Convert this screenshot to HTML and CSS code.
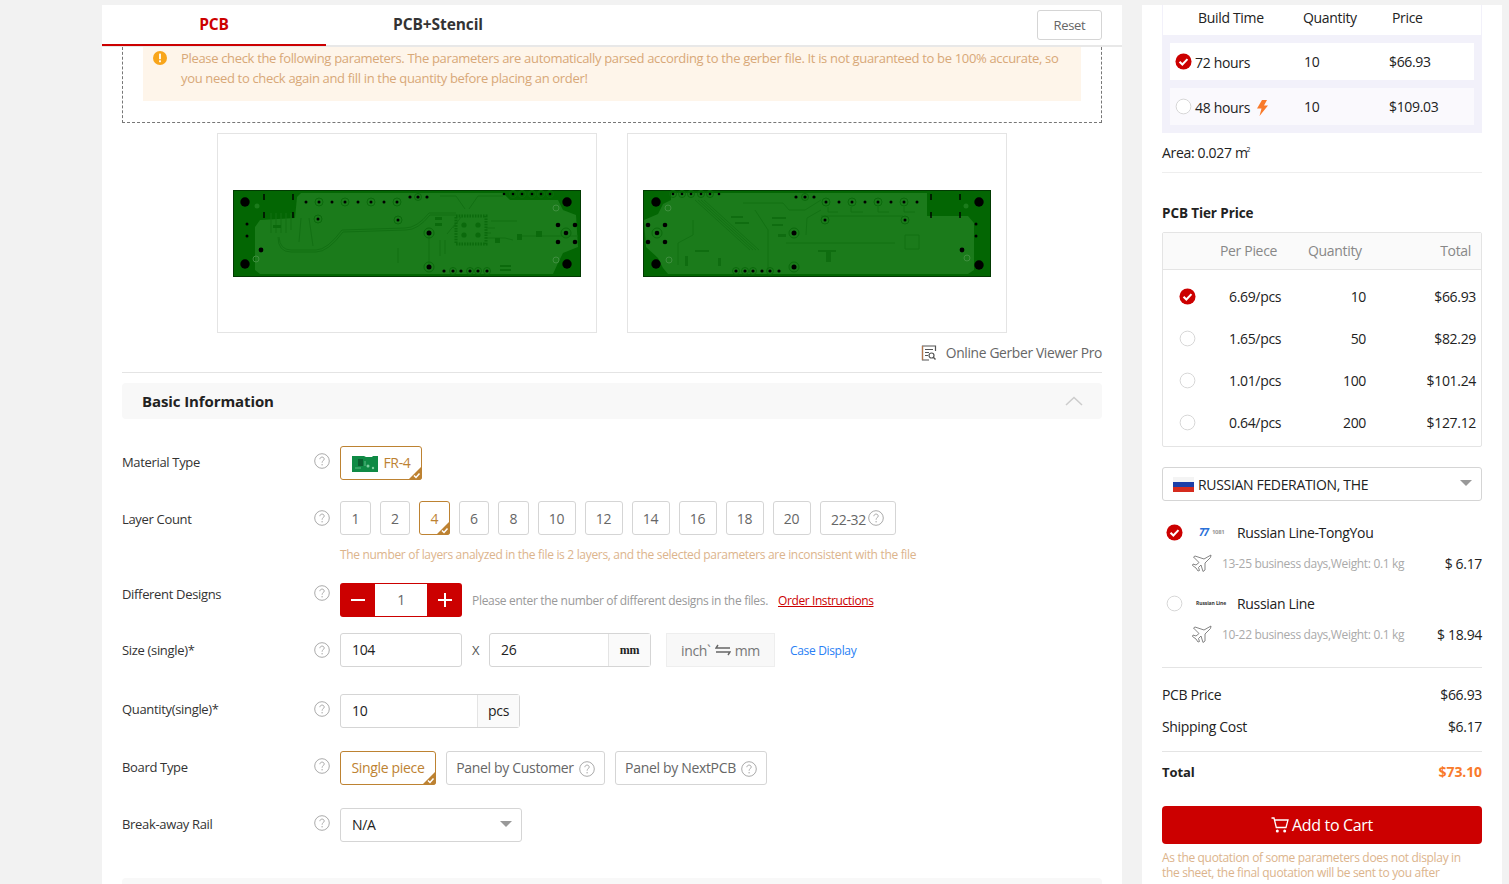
FILE: index.html
```html
<!DOCTYPE html>
<html lang="en">
<head>
  <meta charset="UTF-8">
  <meta name="viewport" content="width=device-width,initial-scale=1.0">
  <title>PCB Quote</title>
  <link rel="stylesheet" href="styles.css">
</head>
<body>
  <!-- shared icons -->
  <svg class="sprite" xmlns="http://www.w3.org/2000/svg">
    <symbol id="i-help" viewBox="0 0 16 16"><circle cx="8" cy="8" r="7.300" fill="#fff" stroke="#aaa"/><path d="M5.900 6.200c0-1.300 1-2.100 2.200-2.100s2.100.8 2.100 1.900c0 1.600-2.100 1.700-2.100 3.700" fill="none" stroke="#aaa"/><circle cx="8.100" cy="11.700" r=".7" fill="#aaa"/></symbol>
    <symbol id="i-tag" viewBox="0 0 14 14"><path d="M14 0V11a3 3 0 0 1-3 3H0z" fill="#bd8232"/><path d="M6 9.500l2 2 3.500-4" fill="none" stroke="#fff" stroke-width="1.500"/></symbol>
    <symbol id="i-on" viewBox="0 0 18 18"><circle cx="9" cy="9" r="8.500" fill="#cc0000"/><path d="M4.800 9.200l3 2.900 5.400-5.600" fill="none" stroke="#fff" stroke-width="2.200"/></symbol>
    <symbol id="i-off" viewBox="0 0 18 18"><circle cx="9" cy="9" r="7.800" fill="#fff" stroke="#d5d5d5"/></symbol>
    <symbol id="i-plane" viewBox="0 0 20 18"><path d="M19 1l-7 4L3 2 1.500 3 7 8.500 4 11l-3-1-.5 1.500L4 14l2 3 1.500-.5-1-3L9 11l2 6.500 2-1.500V9l5.500-5.500z" fill="#fff" stroke="#777" stroke-width=".9" stroke-linejoin="round"/></symbol>
    <pattern id="vias" width="9" height="8" patternUnits="userSpaceOnUse"><circle cx="2" cy="2" r=".4" fill="#1f5f8a"/></pattern>
  </svg>

  <main class="page">
    <section class="left">
      <div class="tabs">
        <a class="tab tab-on">PCB</a>
        <a class="tab">PCB+Stencil</a>
        <button class="reset">Reset</button>
      </div>

      <div class="body">
        <div class="upload">
          <div class="alert">
            <svg class="alert-ic" viewBox="0 0 16 16"><circle cx="8" cy="8" r="7" fill="#f8a51b"/><rect x="7.100" y="3.600" width="1.800" height="5.600" fill="#fff"/><rect x="7.100" y="10.300" width="1.800" height="1.900" fill="#fff"/></svg>
            <p>Please check the following parameters. The parameters are automatically parsed according to the gerber file. It is not guaranteed to be 100% accurate, so you need to check again and fill in the quantity before placing an order!</p>
          </div>
        </div>

        <div class="previews">
          <div class="preview">
            <svg class="board" viewBox="0 0 348 87">
              <rect x=".5" y=".5" width="347" height="86" fill="#036603" stroke="#023a02"/>
              <path d="M68 3H270l7 7H325l5 10 13 5 2 32-15 6-5 10-5 11H27l-5-4V37l5-7 35-2 2-21z" fill="#1b7b1b"/>
              <path d="M68 3H270l7 7H325l5 10 13 5 2 32-15 6-5 10-5 11H27l-5-4V37l5-7 35-2 2-21z" fill="url(#vias)"/>
              <g fill="none" stroke="#127013" stroke-width="1">
                <path d="M45 47Q45 62 58 62H83Q95 62 110 42L173 40Q185 40 197 25H223"/>
                <path d="M46 47Q47 60 58 60H83Q94 60 109 40L172 38Q184 38 196 23H223"/>
                <path d="M38 23V43M43 23V43M48 23V43M53 23V43M58 23V40"/>
                <path d="M68 28L66 52M76 28L80 56M196 43V77M165 58V73M207 50V66M212 50V64"/>
                <path d="M207 6H223L232 19M270 6H245L236 19M258 31H284M288 46H345M253 48H272L280 50"/>
                <path d="M228 27L220 38M223 33L214 44M253 38H262M253 43H258"/>
              </g>
              <rect x="223" y="26" width="30" height="28" fill="none" stroke="#0b6a0c" stroke-width="3" stroke-dasharray="1.500 1.200"/>
              <g fill="#0b6a0c">
                <rect x="202" y="27" width="7" height="3"/><rect x="202" y="33" width="7" height="3"/>
                <rect x="262" y="48" width="5" height="5"/><rect x="284" y="44" width="5" height="6"/><rect x="303" y="41" width="6" height="6"/>
                <rect x="267" y="75" width="11" height="2"/><rect x="267" y="79" width="11" height="2"/>
                <rect x="40" y="35" width="8" height="3"/>
              </g>
              <g fill="#0b6a0c">
                <circle cx="231" cy="35" r="2.600"/><circle cx="245" cy="35" r="2.600"/><circle cx="231" cy="45" r="2.600"/><circle cx="245" cy="45" r="2.600"/>
              </g>
              <g fill="none" stroke="#0b6a0c">
                <circle cx="86" cy="12" r="4"/><circle cx="112" cy="12" r="4"/><circle cx="138" cy="12" r="4"/><circle cx="164" cy="12" r="4"/>
                <circle cx="85" cy="29" r="4"/><circle cx="165" cy="30" r="4"/><circle cx="196" cy="43" r="5"/><circle cx="196" cy="77" r="5"/>
                <circle cx="333" cy="43" r="5"/><circle cx="220" cy="81" r="3.500"/><circle cx="237" cy="81" r="3.500"/><circle cx="245" cy="81" r="3.500"/><circle cx="254" cy="81" r="3.500"/>
                <circle cx="185" cy="7" r="3.500"/><circle cx="280" cy="4" r="3.500"/><circle cx="289" cy="4" r="3.500"/><circle cx="299" cy="4" r="3.500"/><circle cx="308" cy="4" r="3.500"/><circle cx="317" cy="4" r="3.500"/>
              </g>
              <g stroke="#3f8f3f" fill="none"><circle cx="323" cy="18" r="3"/><circle cx="323" cy="70" r="3"/><circle cx="23" cy="69" r="3"/></g>
              <circle cx="24" cy="16" r="2.500" fill="#1b7b1b"/>
              <g>
                <circle cx="12" cy="12" r="4.700"/><circle cx="12" cy="74" r="4.700"/><circle cx="334" cy="12" r="4.700"/><circle cx="334" cy="74" r="4.700"/>
                <circle cx="14" cy="34" r="1.500"/><circle cx="14" cy="46" r="1.500"/><circle cx="28" cy="60" r="2.400"/>
                <circle cx="73" cy="12" r="1.500"/><circle cx="86" cy="12" r="1.500"/><circle cx="99" cy="12" r="1.500"/><circle cx="112" cy="12" r="1.500"/><circle cx="125" cy="12" r="1.500"/><circle cx="138" cy="12" r="1.500"/><circle cx="151" cy="12" r="1.500"/><circle cx="164" cy="12" r="1.500"/>
                <circle cx="85" cy="29" r="1.500"/><circle cx="165" cy="30" r="1.500"/>
                <circle cx="177" cy="7" r="1.600"/><circle cx="185" cy="7" r="1.600"/><circle cx="194" cy="7" r="1.600"/>
                <circle cx="271" cy="4" r="1.300"/><circle cx="280" cy="4" r="1.300"/><circle cx="289" cy="4" r="1.300"/><circle cx="299" cy="4" r="1.300"/><circle cx="308" cy="4" r="1.300"/><circle cx="317" cy="4" r="1.300"/>
                <circle cx="196" cy="43" r="2.500"/><circle cx="196" cy="77" r="2.500"/>
                <circle cx="211" cy="81" r="1.600"/><circle cx="220" cy="81" r="1.600"/><circle cx="228" cy="81" r="1.600"/><circle cx="237" cy="81" r="1.600"/><circle cx="245" cy="81" r="1.600"/><circle cx="254" cy="81" r="1.600"/>
                <circle cx="325" cy="35" r="2.300"/><circle cx="342" cy="35" r="2.300"/><circle cx="333" cy="43" r="2.300"/><circle cx="325" cy="52" r="2.300"/><circle cx="342" cy="52" r="2.300"/>
                <rect x="30.300" y="4" width="1.400" height="6"/><rect x="59.300" y="4" width="1.400" height="6"/><rect x="30.300" y="22" width="1.400" height="6"/><rect x="59.300" y="22" width="1.400" height="6"/>
              </g>
            </svg>
          </div>
          <div class="preview">
            <svg class="board" viewBox="0 0 348 87">
              <rect x=".5" y=".5" width="347" height="86" fill="#036603" stroke="#023a02"/>
              <path d="M28 3H284v23H325l6 7V80l-6 4H25l-5-6-5-10L3 57 1 30l14-6 5-10 8-4z" fill="#1b7b1b"/>
              <path d="M28 3H284v23H325l6 7V80l-6 4H25l-5-6-5-10L3 57 1 30l14-6 5-10 8-4z" fill="url(#vias)"/>
              <g fill="none" stroke="#127013" stroke-width=".9">
                <path d="M52 10L107 60M55 10L110 60M58 10L113 60M61 10L116 60"/>
                <path d="M100 13H140L146 20H162L178 10M163 45L164 28L178 20"/>
                <path d="M143 53H252M112 20L125 40V82M50 30V45L35 53V75"/>
                <path d="M185 17V22H195M208 17V22H220M235 17V22H246M261 17V22H272M178 26H260M262 45H276V59H262z"/>
              </g>
              <g fill="#0f6d10">
                <rect x="129" y="27" width="14" height="2"/><rect x="129" y="34" width="11" height="2"/><rect x="135" y="44" width="8" height="3"/>
                <rect x="88" y="26" width="12" height="2"/><rect x="92" y="32" width="14" height="2"/>
                <rect x="175" y="60" width="18" height="2"/><rect x="183" y="62" width="5" height="10"/>
                <rect x="52" y="60" width="14" height="2"/><rect x="42" y="66" width="3" height="10"/><rect x="75" y="68" width="3" height="8"/>
              </g>
              <g fill="none" stroke="#0b6a0c">
                <circle cx="183" cy="12" r="4"/><circle cx="209" cy="12" r="4"/><circle cx="235" cy="12" r="4"/><circle cx="261" cy="12" r="4"/>
                <circle cx="182" cy="30" r="4"/><circle cx="262" cy="30" r="4"/><circle cx="151" cy="43" r="5"/><circle cx="151" cy="77" r="5"/>
                <circle cx="14" cy="43" r="5"/><circle cx="93" cy="81" r="3.500"/><circle cx="102" cy="81" r="3.500"/><circle cx="110" cy="81" r="3.500"/><circle cx="127" cy="81" r="3.500"/>
                <circle cx="162" cy="7" r="3.500"/><circle cx="30" cy="4" r="3.500"/><circle cx="39" cy="4" r="3.500"/><circle cx="48" cy="4" r="3.500"/><circle cx="58" cy="4" r="3.500"/><circle cx="67" cy="4" r="3.500"/>
              </g>
              <g stroke="#3f8f3f" fill="none"><circle cx="25" cy="18" r="3"/><circle cx="26" cy="70" r="3"/><circle cx="324" cy="68" r="3"/></g>
              <circle cx="323" cy="16" r="2.500" fill="#1b7b1b"/>
              <g>
                <circle cx="13" cy="12" r="4.700"/><circle cx="13" cy="74" r="4.700"/><circle cx="336" cy="12" r="4.700"/><circle cx="336" cy="75" r="4.700"/>
                <circle cx="333" cy="34" r="1.500"/><circle cx="333" cy="46" r="1.500"/><circle cx="319" cy="60" r="2.400"/>
                <circle cx="183" cy="12" r="1.500"/><circle cx="196" cy="12" r="1.500"/><circle cx="209" cy="12" r="1.500"/><circle cx="222" cy="12" r="1.500"/><circle cx="235" cy="12" r="1.500"/><circle cx="248" cy="12" r="1.500"/><circle cx="261" cy="12" r="1.500"/><circle cx="274" cy="12" r="1.500"/>
                <circle cx="182" cy="30" r="1.500"/><circle cx="262" cy="30" r="1.500"/>
                <circle cx="153" cy="7" r="1.600"/><circle cx="162" cy="7" r="1.600"/><circle cx="171" cy="7" r="1.600"/>
                <circle cx="30" cy="4" r="1.300"/><circle cx="39" cy="4" r="1.300"/><circle cx="48" cy="4" r="1.300"/><circle cx="58" cy="4" r="1.300"/><circle cx="67" cy="4" r="1.300"/><circle cx="76" cy="4" r="1.300"/>
                <circle cx="151" cy="43" r="2.500"/><circle cx="151" cy="77" r="2.500"/>
                <circle cx="93" cy="81" r="1.600"/><circle cx="102" cy="81" r="1.600"/><circle cx="110" cy="81" r="1.600"/><circle cx="119" cy="81" r="1.600"/><circle cx="127" cy="81" r="1.600"/><circle cx="136" cy="81" r="1.600"/>
                <circle cx="5" cy="35" r="2.300"/><circle cx="22" cy="35" r="2.300"/><circle cx="14" cy="43" r="2.300"/><circle cx="5" cy="52" r="2.300"/><circle cx="22" cy="52" r="2.300"/>
                <rect x="287.300" y="4" width="1.400" height="6"/><rect x="316.300" y="4" width="1.400" height="6"/><rect x="287.300" y="22" width="1.400" height="6"/><rect x="316.300" y="22" width="1.400" height="6"/>
              </g>
            </svg>
          </div>
        </div>

        <div class="viewer">
          <svg class="viewer-ic" viewBox="0 0 16 16"><path d="M14.500 6V1H1.500v14H8" fill="none" stroke="#555" stroke-width="1.200"/><path d="M1.500 1v14" stroke="#b5764a" stroke-width="1.200"/><path d="M4 4.500h8M4 7.500h4M4 10.500h3" stroke="#555"/><circle cx="10.500" cy="10.500" r="2.500" fill="none" stroke="#555" stroke-width="1.200"/><path d="M12.300 12.300l2.200 2.200" stroke="#555" stroke-width="1.400"/></svg>
          <span>Online Gerber Viewer Pro</span>
        </div>

        <div class="sec-head">
          <h2>Basic Information</h2>
          <svg class="chev" viewBox="0 0 18 10"><path d="M1 9l8-7.500L17 9" fill="none" stroke="#ccc" stroke-width="1.500"/></svg>
        </div>

        <div class="row row-material">
          <label class="lbl">Material Type</label>
          <svg class="help"><use href="#i-help"/></svg>
          <div class="ctl">
            <button class="opt opt-on opt-fr4">
              <svg class="fr4" viewBox="0 0 26 17"><path d="M0 1h12l2 1h6l1-1h5v16H0z" fill="#0f8a45"/><rect x="6" y="4" width="5" height="7" fill="#0a5f30"/><circle cx="16" cy="11" r="1.500" fill="#7fcfa0"/><circle cx="21" cy="13" r="1.200" fill="#7fcfa0"/><path d="M3 13h6M13 6v5" stroke="#5dbb85"/></svg>
              FR-4
              <svg class="tag"><use href="#i-tag"/></svg>
            </button>
          </div>
        </div>

        <div class="row row-layers">
          <label class="lbl">Layer Count</label>
          <svg class="help"><use href="#i-help"/></svg>
          <div class="ctl ctl-col">
            <div class="layers">
              <button class="opt l1">1</button>
              <button class="opt l1">2</button>
              <button class="opt opt-on l1">4<svg class="tag"><use href="#i-tag"/></svg></button>
              <button class="opt l1">6</button>
              <button class="opt l1">8</button>
              <button class="opt l2">10</button>
              <button class="opt l2">12</button>
              <button class="opt l2">14</button>
              <button class="opt l2">16</button>
              <button class="opt l2">18</button>
              <button class="opt l2">20</button>
              <button class="opt l3">22-32<svg class="help help-in"><use href="#i-help"/></svg></button>
            </div>
            <p class="hint">The number of layers analyzed in the file is 2 layers, and the selected parameters are inconsistent with the file</p>
          </div>
        </div>

        <div class="row row-designs">
          <label class="lbl">Different Designs</label>
          <svg class="help"><use href="#i-help"/></svg>
          <div class="ctl">
            <div class="stepper">
              <span class="step">
                <svg viewBox="0 0 14 14"><rect y="6" width="14" height="2" fill="#fff"/></svg>
              </span>
              <span class="step-val">1</span>
              <span class="step">
                <svg viewBox="0 0 14 14"><path d="M0 6h6V0h2v6h6v2H8v6H6V8H0z" fill="#fff"/></svg>
              </span>
            </div>
            <span class="note">Please enter the number of different designs in the files.</span>
            <a class="instr">Order Instructions</a>
          </div>
        </div>

        <div class="row row-size">
          <label class="lbl">Size (single)*</label>
          <svg class="help"><use href="#i-help"/></svg>
          <div class="ctl">
            <span class="field f-w"><span class="val">104</span></span>
            <span class="x">X</span>
            <span class="field f-h"><span class="val">26</span><span class="addon addon-mm">mm</span></span>
            <span class="swap">inch`
              <svg viewBox="0 0 16 12"><path d="M3 1L1 4H15M13 11l2-3H1" fill="none" stroke="#666" stroke-width="1.400"/></svg>
              mm</span>
            <a class="case">Case Display</a>
          </div>
        </div>

        <div class="row row-qty">
          <label class="lbl">Quantity(single)*</label>
          <svg class="help"><use href="#i-help"/></svg>
          <div class="ctl">
            <span class="field f-q"><span class="val">10</span><span class="addon">pcs</span></span>
          </div>
        </div>

        <div class="row row-board">
          <label class="lbl">Board Type</label>
          <svg class="help"><use href="#i-help"/></svg>
          <div class="ctl">
            <button class="opt opt-on b1">Single piece<svg class="tag"><use href="#i-tag"/></svg></button>
            <button class="opt b2">Panel by Customer<svg class="help help-in"><use href="#i-help"/></svg></button>
            <button class="opt b3">Panel by NextPCB<svg class="help help-in"><use href="#i-help"/></svg></button>
          </div>
        </div>

        <div class="row row-rail">
          <label class="lbl">Break-away Rail</label>
          <svg class="help"><use href="#i-help"/></svg>
          <div class="ctl">
            <span class="field f-s"><span class="val">N/A</span><i class="caret"></i></span>
          </div>
        </div>

        <div class="sec-next"></div>
      </div>
    </section>

    <aside class="right">
      <div class="build-head">
        <span class="bh1">Build Time</span><span class="bh2">Quantity</span><span class="bh3">Price</span>
      </div>
      <div class="build-box">
        <div class="build-row">
          <svg class="radio"><use href="#i-on"/></svg>
          <span class="b-time">72 hours</span><span class="b-qty">10</span><span>$66.93</span>
        </div>
        <div class="build-row build-alt">
          <svg class="radio"><use href="#i-off"/></svg>
          <span class="b-time">48 hours
            <svg class="bolt" viewBox="0 0 12 16"><path d="M6 0h5L8 5.500h4L3.500 16l2-7.500H1z" fill="#f97a2a"/></svg>
          </span><span class="b-qty">10</span><span>$109.03</span>
        </div>
      </div>
      <p class="area">Area: 0.027 m<sup class="sq">2</sup></p>

      <h3 class="tier-title">PCB Tier Price</h3>
      <div class="tier">
        <div class="tier-head"><span class="t-piece">Per Piece</span><span class="t-qty">Quantity</span><span class="t-total">Total</span></div>
        <div class="tier-row"><svg class="radio"><use href="#i-on"/></svg><span class="t-piece">6.69/pcs</span><span class="t-qty">10</span><span class="t-total">$66.93</span></div>
        <div class="tier-row"><svg class="radio"><use href="#i-off"/></svg><span class="t-piece">1.65/pcs</span><span class="t-qty">50</span><span class="t-total">$82.29</span></div>
        <div class="tier-row"><svg class="radio"><use href="#i-off"/></svg><span class="t-piece">1.01/pcs</span><span class="t-qty">100</span><span class="t-total">$101.24</span></div>
        <div class="tier-row"><svg class="radio"><use href="#i-off"/></svg><span class="t-piece">0.64/pcs</span><span class="t-qty">200</span><span class="t-total">$127.12</span></div>
      </div>

      <div class="country">
        <svg class="flag" viewBox="0 0 21 15"><rect width="21" height="5" fill="#f4f4f4"/><rect y="5" width="21" height="5" fill="#1c3fa8"/><rect y="10" width="21" height="5" fill="#d52b1e"/></svg>
        <span>RUSSIAN FEDERATION, THE</span><i class="caret"></i>
      </div>

      <div class="ship">
        <div class="ship-top">
          <svg class="radio"><use href="#i-on"/></svg>
          <span class="logo logo-77"><b>77</b><i>1081</i></span>
          <span class="ship-name">Russian Line-TongYou</span>
        </div>
        <div class="ship-sub">
          <svg class="plane"><use href="#i-plane"/></svg>
          <span class="ship-days">13-25 business days,Weight: 0.1 kg</span>
          <span class="ship-cost">$ 6.17</span>
        </div>
      </div>
      <div class="ship ship-2">
        <div class="ship-top">
          <svg class="radio"><use href="#i-off"/></svg>
          <span class="logo logo-rl">Russian Line</span>
          <span class="ship-name">Russian Line</span>
        </div>
        <div class="ship-sub">
          <svg class="plane"><use href="#i-plane"/></svg>
          <span class="ship-days">10-22 business days,Weight: 0.1 kg</span>
          <span class="ship-cost">$ 18.94</span>
        </div>
      </div>

      <div class="sum">
        <div class="sum-row"><span>PCB Price</span><span>$66.93</span></div>
        <div class="sum-row"><span>Shipping Cost</span><span>$6.17</span></div>
      </div>
      <div class="total"><b>Total</b><b class="total-val">$73.10</b></div>
      <button class="cart">
        <svg viewBox="0 0 18 16"><path d="M.5 1H3l2.300 9.500H15L17 3H3.700" fill="none" stroke="#fff" stroke-width="1.300"/><circle cx="6.300" cy="14" r="1.500" fill="#fff"/><circle cx="13.700" cy="14" r="1.500" fill="#fff"/></svg>
        Add to Cart
      </button>
      <p class="disclaimer">As the quotation of some parameters does not display in the sheet, the final quotation will be sent to you after</p>
    </aside>
  </main>
</body>
</html>
```

FILE: styles.css
```css
html, body { margin:0; padding:0; height:884px; overflow:hidden; background:#f2f2f2; }
body { font-family:"Open Sans","Noto Sans",sans-serif; font-size:13px; color:#333; letter-spacing:-.33px; }
p, h2, h3 { margin:0; }
button { font-family:inherit; letter-spacing:inherit; padding:0; cursor:pointer; background:#fff; }
.sprite { display:none; }

.page { display:flex; gap:20px; padding:5px 0 0 102px; }

/* left column */
.left { width:1020px; height:879px; background:#fff; overflow:hidden; }
.tabs { display:flex; align-items:center; height:40px; border-bottom:2px solid #e8e8e8; }
.tab { width:224px; height:40px; line-height:39px; text-align:center; font-size:15.500px; font-weight:700; color:#333; letter-spacing:-.1px; }
.tab-on { color:#cc0000; border-bottom:2px solid #cc0000; line-height:41px; }
.reset { margin-left:auto; margin-right:20px; width:65px; height:30px; border:1px solid #d5d5d5; border-radius:3px; color:#666; font-size:13px; }

.body { padding:0 20px; }
.upload { border:1px dashed #777; border-top:none; padding:0 20px 21px; height:76px; box-sizing:border-box; }
.alert { display:flex; background:#fef5ea; height:54px; padding:1px 10px 0 9px; box-sizing:border-box; color:#d8a878; line-height:20px; }
.alert-ic { width:16px; height:16px; flex:none; margin:2px 13px 0 0; }
.alert p { width:885px; }

.previews { display:flex; gap:30px; justify-content:center; margin-top:10px; }
.preview { width:380px; height:200px; box-sizing:border-box; border:1px solid #e4e4e4; display:flex; align-items:center; justify-content:center; }
.board { width:348px; height:87px; display:block; }

.viewer { display:flex; justify-content:flex-end; align-items:center; gap:9px; height:40px; border-bottom:1px solid #e4e4e4; color:#666; font-size:13.800px; box-sizing:border-box; }
.viewer-ic { width:16px; height:16px; }
.sec-head { display:flex; align-items:center; justify-content:space-between; height:36px; background:#f8f8f8; border-radius:4px; margin-top:10px; padding:0 20px; }
.sec-head h2 { font-size:15px; font-weight:700; color:#222; letter-spacing:-.1px; }
.chev { width:18px; height:10px; margin-right:-1px; }

/* form rows */
.row { display:flex; align-items:flex-start; }
.lbl { width:192px; flex:none; color:#333; line-height:32px; }
.help { width:16px; height:16px; flex:none; margin:7px 10px 0 0; }
.ctl { display:flex; align-items:center; }
.ctl-col { display:block; }
.row-material { margin-top:27px; }
.row-layers { margin-top:21px; }
.row-designs { margin-top:20px; }
.row-size { margin-top:16px; }
.row-qty { margin-top:27px; }
.row-board { margin-top:23px; }
.row-rail { margin-top:23px; }
.row-layers .lbl { line-height:36px; }
.row-layers .help { margin-top:9px; }
.row-size .lbl { line-height:34px; }
.row-size .help { margin-top:9px; }
.row-qty .lbl { line-height:30px; }
.row-designs .lbl { line-height:22px; }
.row-designs .help { margin-top:2px; }

.opt { position:relative; height:34px; border:1px solid #d5d5d5; border-radius:3px; color:#666; font-size:14px; box-sizing:border-box; display:flex; align-items:center; justify-content:center; flex:none; }
.opt-on { border-color:#bd8232; color:#bd8232; }
.tag { position:absolute; right:-1px; bottom:-1px; width:14px; height:14px; }
.opt-fr4 { width:82px; padding:0 0 1px 1px; }
.fr4 { width:26px; height:17px; margin:1px 5px 0 0; }
.layers { display:flex; gap:9px; }
.l1 { width:30.500px; }
.l2 { width:38px; }
.l3 { width:76px; padding-top:3px; }
.help-in { margin:0 0 0 2px; }
.row-layers .l3 .help-in { margin-top:-3px; }
.hint { margin-top:12px; color:#dcb48c; font-size:12px; line-height:16px; letter-spacing:-.32px; }

.stepper { display:flex; width:122px; height:34px; background:#cc0000; border-radius:3px; overflow:hidden; }
.step { width:35px; display:flex; align-items:center; justify-content:center; }
.step svg { width:14px; height:14px; }
.step-val { width:52px; background:#fff; margin:1px 0; text-align:center; line-height:32px; color:#666; font-size:14px; }
.note { margin-left:10px; color:#999; font-size:12px; letter-spacing:-.31px; }
.instr { margin-left:10px; color:#cc0000; font-size:12px; text-decoration:underline; letter-spacing:-.4px; }

.field { display:flex; align-items:center; height:34px; border:1px solid #d5d5d5; border-radius:3px; box-sizing:border-box; color:#222; font-size:14px; position:relative; }
.val { padding:0 0 2px 11px; flex:1; }
.addon { width:41px; height:32px; line-height:32px; text-align:center; background:#fafafa; border-left:1px solid #e4e4e4; }
.addon-mm { font-family:"Liberation Serif",serif; font-weight:700; font-size:12px; }
.f-w { width:122px; }
.x { width:27px; text-align:center; color:#555; font-size:13px; }
.f-h { width:162px; }
.swap { display:flex; align-items:center; justify-content:center; gap:4px; width:109px; height:34px; margin-left:15px; background:#f8f8f8; border:1px solid #eee; box-sizing:border-box; color:#777; font-size:14px; }
.swap svg { width:16px; height:12px; }
.case { margin-left:15px; color:#2a7ff5; font-size:12px; }
.f-q { width:180px; }
.b1, .b2, .b3 { padding-bottom:2px; }
.b1 { width:96px; }
.b2 { width:159px; margin-left:10px; }
.b3 { width:152px; margin-left:10px; }
.b2 .help-in, .b3 .help-in { margin:3px 0 0 5px; }
.f-s { width:182px; }
.caret { width:0; height:0; border-left:6px solid transparent; border-right:6px solid transparent; border-top:6px solid #999; position:absolute; right:9px; top:12px; }
.sec-next { height:20px; background:#f8f8f8; border-radius:4px; margin-top:36px; }

/* right column */
.right { width:360px; height:879px; background:#fff; padding:0 20px; box-sizing:border-box; overflow:hidden; color:#222; font-size:14px; }
.build-head { height:30px; line-height:26px; border:1px solid #f2f1fa; border-width:0 1px; position:relative; }
.bh1 { position:absolute; left:35px; }
.bh2 { position:absolute; left:140px; }
.bh3 { position:absolute; left:229px; }
.build-box { background:#f2f1fa; padding:8px; display:flex; flex-direction:column; gap:8px; }
.build-row { display:flex; align-items:center; height:37px; background:#fff; padding-left:5px; }
.build-alt { background:#faf9fd; }
.radio { width:17px; height:17px; flex:none; }
.b-time { display:flex; align-items:center; gap:6px; width:109px; margin-left:3px; padding-top:2px; }
.b-qty { width:85px; }
.bolt { width:12px; height:16px; }
.area { margin-top:11px; line-height:18px; border-bottom:1px solid #eee; padding-bottom:10px; }
.sq { font-size:7px; line-height:0; margin-left:-1px; }
.tier-title { margin-top:31px; font-size:13.500px; font-weight:700; color:#222; line-height:18px; letter-spacing:-.1px; }
.tier { margin-top:10px; border:1px solid #e4e4e4; border-radius:2px; height:215px; box-sizing:border-box; }
.tier-head { display:flex; height:36px; line-height:35px; background:#fafafa; border-bottom:1px solid #e4e4e4; color:#888; }
.tier-head .t-piece { margin-left:57px; width:72px; }
.tier-head .t-qty { margin-left:16px; width:64px; }
.tier-head .t-total { width:99px; text-align:right; }
.tier-row { display:flex; align-items:center; height:42px; }
.tier-row:nth-child(2) { margin-top:5px; }
.tier-row .radio { margin-left:16px; }
.tier-row .t-piece { margin-left:33px; width:72px; }
.tier-row .t-qty { width:65px; text-align:right; }
.tier-row .t-total { width:110px; text-align:right; }
.country { display:flex; align-items:center; position:relative; margin-top:20px; height:34px; border:1px solid #d5d5d5; border-radius:3px; box-sizing:border-box; padding-left:10px; }
.flag { width:21px; height:15px; margin-right:4px; }
.ship { margin-top:17px; }
.ship-2 { margin-top:12px; }
.ship-top { display:flex; align-items:center; height:28px; }
.ship-top .radio { margin-left:4px; }
.logo { width:43px; margin-left:11px; flex:none; display:flex; align-items:center; gap:2px; padding-left:5px; box-sizing:border-box; }
.logo-77 b { color:#2a6fd8; font-size:10px; font-style:italic; letter-spacing:-1px; }
.logo-77 i { color:#999; font-size:6px; font-style:normal; font-weight:700; margin-left:2px; }
.logo-rl { font-size:5px; font-weight:700; letter-spacing:-.1px; color:#333; padding-left:2px; }
.ship-sub { display:flex; align-items:center; height:28px; margin-top:3px; }
.plane { width:20px; height:18px; margin-left:30px; flex:none; }
.ship-days { margin-left:10px; color:#aaa; font-size:12px; }
.ship-cost { margin-left:auto; }
.sum { margin-top:19px; border-top:1px solid #e4e4e4; padding-top:11px; }
.sum-row { display:flex; justify-content:space-between; height:32px; line-height:32px; }
.total { display:flex; justify-content:space-between; margin-top:8px; border-top:1px solid #e4e4e4; padding-top:11px; line-height:18px; font-size:13px; letter-spacing:-.1px; }
.total-val { color:#f97a2a; font-size:14px; }
.cart { display:flex; align-items:center; justify-content:center; gap:3px; width:320px; height:38px; margin-top:25px; background:#cc0000; border:none; border-radius:4px; color:#fff; font-size:16px; }
.cart svg { width:18px; height:16px; }
.disclaimer { margin-top:6px; width:305px; color:#dcb48c; font-size:12px; line-height:15px; }
```
